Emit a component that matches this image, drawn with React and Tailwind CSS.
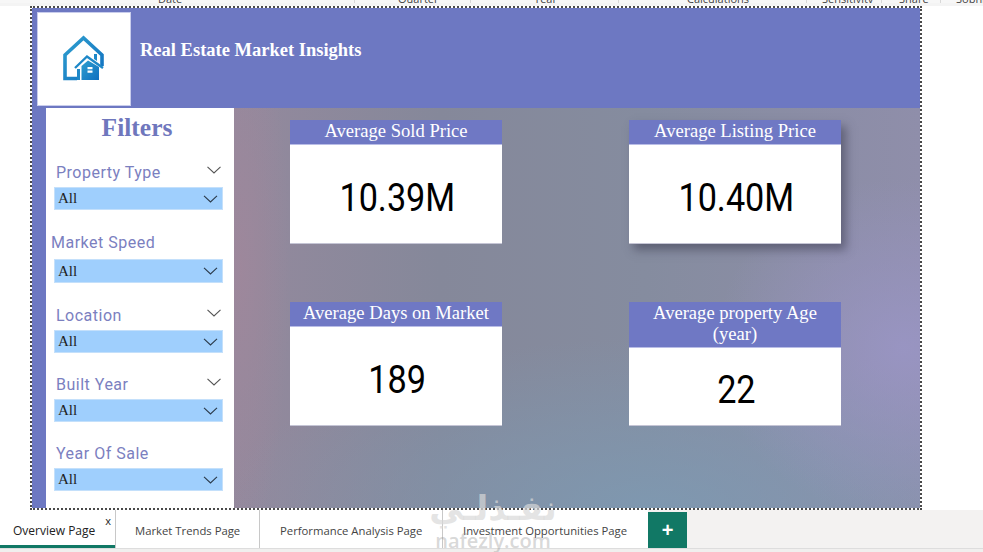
import React from 'react';

const slicers = [
  { label: 'Property Type', labelClass: 'mt-[15px] mb-[4px] pl-[2px]', boxClass: 'h-[23px]', chevron: true },
  { label: 'Market Speed', labelClass: 'mt-[23px] mb-[6px] -ml-[3px]', boxClass: 'h-[24px]', chevron: false },
  { label: 'Location', labelClass: 'mt-[23px] mb-[4px] pl-[2px]', boxClass: 'h-[23px]', chevron: true },
  { label: 'Built Year', labelClass: 'mt-[22px] mb-[4px] pl-[2px]', boxClass: 'h-[23px]', chevron: true },
  { label: 'Year Of Sale', labelClass: 'mt-[22px] mb-[4px] pl-[2px]', boxClass: 'h-[23px]', chevron: false },
];

const ribbon = [
  { text: 'Date', cls: 'w-[354px] pl-[158px]' },
  { text: 'Quarter', cls: 'w-[116px] pl-[43px] border-l border-[#d8d8d8]' },
  { text: 'Year', cls: 'w-[148px] pl-[63px] border-l border-[#d8d8d8]' },
  { text: 'Calculations', cls: 'w-[188px] pl-[68px] border-l border-[#d8d8d8]' },
  { text: 'Sensitivity', cls: 'w-[75px] pl-[15px] border-l border-[#d8d8d8]' },
  { text: 'Share', cls: 'w-[59px] pl-[17px] border-l border-[#d8d8d8]' },
  { text: 'Sophie', cls: 'w-[43px] pl-[15px] border-l border-[#d8d8d8]' },
];

const tabs = [
  { name: 'Overview Page', cls: 'w-[115px] pl-[13px] pt-[7px] text-[12px] text-[#222] border-b-[3px] border-b-[#117865]', close: true },
  { name: 'Market Trends Page', cls: 'w-[144px] pl-[19px] pt-[4px] border-l border-[#c8c8c8]' },
  { name: 'Performance Analysis Page', cls: 'w-[183px] pl-[20px] pt-[4px] border-l border-[#c8c8c8]' },
  { name: 'Investment Opportunities Page', cls: 'w-[206px] pl-[20px] pt-[4px] border-l border-[#c8c8c8]' },
];

function Chevron({ className }) {
  return (
    <svg viewBox="0 0 14 8" className={className} fill="none" stroke="currentColor" strokeWidth="1.1">
      <path d="M0.5 0.8 L7 7 L13.5 0.8" />
    </svg>
  );
}

function Logo() {
  return (
    <svg width="44" height="46" viewBox="0 0 44 46">
      <defs>
        <linearGradient id="logoGrad" x1="0" y1="0" x2="1" y2="1">
          <stop offset="0" stopColor="#2f9fcf" />
          <stop offset="1" stopColor="#0f6fc0" />
        </linearGradient>
      </defs>
      <path d="M15 43.5 H3 V20 L21.5 3 L40 20 V31" fill="none" stroke="url(#logoGrad)" strokeWidth="3.6" />
      <path d="M13 33 L25 21.5 L41 33" fill="none" stroke="#1e88c8" strokeWidth="2.4" />
      <path d="M32 19 H35 V26 L32 24 Z" fill="#1e88c8" />
      <path d="M15 34 H18 V45 H15 Z" fill="#1e88c8" />
      <path d="M19.5 31 L26 25.5 L37 32 V45 H19.5 Z" fill="url(#logoGrad)" />
      <path d="M25.5 32 H30.5 V34.3 H25.5 Z M25.5 35.4 H30.5 V37.8 H25.5 Z" fill="#ffffff" />
    </svg>
  );
}

function Card({ title, value, headerClass, shadow }) {
  return (
    <div className={`h-[124px] flex flex-col bg-white border-b border-[#c5c5d5] ${shadow ? 'shadow-[5px_6px_9px_rgba(60,60,80,0.55)]' : ''}`}>
      <div className={`bg-[#6f78c4] text-white text-center font-['Liberation_Serif',serif] text-[18.6px] leading-[21px] border-b border-[#b9bde6] ${headerClass}`}>
        {title}
      </div>
      <div className="flex-1 flex items-center justify-center pt-[8px] pl-[3px] text-black font-['Roboto',sans-serif] text-[38px]">
        <span className="inline-block scale-x-[0.9]">{value}</span>
      </div>
    </div>
  );
}

export default function App() {
  return (
    <div className="relative w-[983px] h-[552px] overflow-hidden bg-white flex flex-col">
      {/* ribbon cut off at the top */}
      <div className="h-[3px] flex items-end overflow-hidden bg-[#f7f7f7] text-[11px] leading-[11px] text-[#444] font-['Open_Sans',sans-serif]">
        {ribbon.map((r) => (
          <div key={r.text} className={`h-full flex items-end shrink-0 whitespace-nowrap ${r.cls}`}>
            <span className="translate-y-[0.5px]">{r.text}</span>
          </div>
        ))}
      </div>
      <div className="h-[3px] bg-[#f4f4f4]" />

      {/* report canvas */}
      <div className="ml-[30px] w-[892px] h-[504px] shrink-0 border-2 border-dotted border-[#4a4a4a] flex flex-col">
        <div className="h-[100px] shrink-0 bg-[#6d78c2] flex items-start pt-[4px] pl-[5px]">
          <div className="w-[94px] h-[94px] bg-white border border-[#c9cdec] flex items-center justify-center pb-[2px]">
            <Logo />
          </div>
          <div className="ml-[9px] mt-[28px] text-white font-bold font-['Liberation_Serif',serif] text-[18.5px] leading-[20px]">
            Real Estate Market Insights
          </div>
        </div>

        <div className="flex-1 flex min-h-0">
          <div className="w-[14px] bg-[#6d78c2]" />
          <div className="w-[188px] bg-white pl-[8px] pr-[11px]">
            <div className="h-[40px] flex items-center justify-center text-[#6f77bd] font-bold font-['Liberation_Serif',serif] text-[25.5px] pr-[3px]">
              Filters
            </div>
            {slicers.map((s) => (
              <div key={s.label}>
                <div className={`h-[20px] flex items-center justify-between pr-[2px] text-[#7b80bf] font-['Roboto',sans-serif] text-[16px] tracking-[0.5px] ${s.labelClass}`}>
                  <span>{s.label}</span>
                  {s.chevron && <Chevron className="w-[14px] h-[8px] mb-[6px] text-[#555]" />}
                </div>
                <div className={`flex items-center justify-between pl-[3px] pr-[4px] bg-[#9fcffd] border border-[#c4e0fb] text-[#222] font-['Liberation_Serif',serif] text-[15px] ${s.boxClass}`}>
                  <span>All</span>
                  <Chevron className="w-[15px] h-[8px] text-[#2b3a4a]" />
                </div>
              </div>
            ))}
          </div>

          <div className="flex-1 pl-[56px] pt-[12px] bg-[#85909f] bg-[radial-gradient(ellipse_50px_280px_at_6px_160px,rgba(160,135,155,0.8),transparent),radial-gradient(ellipse_190px_170px_at_670px_240px,rgba(155,150,200,0.8),transparent),radial-gradient(ellipse_430px_170px_at_420px_400px,rgba(125,155,180,0.8),transparent),linear-gradient(90deg,#94899d_0%,#85889a_30%,#858c9f_60%,#8f8eaa_100%)]">
            <div className="grid grid-cols-[212px_212px] gap-x-[127px] gap-y-[58px]">
              <Card title="Average Sold Price" value="10.39M" headerClass="h-[25px]" />
              <Card title="Average Listing Price" value="10.40M" headerClass="h-[25px]" shadow />
              <Card title="Average Days on Market" value="189" headerClass="h-[25px]" />
              <Card title={<>Average property Age<br />(year)</>} value="22" headerClass="h-[46px]" />
            </div>
          </div>
        </div>
      </div>

      {/* page tabs */}
      <div className="flex-1 flex flex-col bg-[#f3f2f1] min-h-0">
        <div className="h-[38px] flex font-['Open_Sans',sans-serif] text-[11.3px] text-[#444]">
          {tabs.map((t) => (
            <div key={t.name} className={`relative h-full flex items-center bg-white shrink-0 whitespace-nowrap ${t.cls}`}>
              {t.name}
              {t.close && <span className="absolute right-[4px] top-[5px] text-[11px] leading-none text-[#222]">x</span>}
            </div>
          ))}
          <div className="w-[39px] h-[36px] mt-[2px] bg-[#117865] flex items-center justify-center text-white font-bold text-[20px] leading-none font-['Liberation_Sans',sans-serif]">
            +
          </div>
        </div>
        <div className="flex-1 border-t border-[#dddddd] bg-[#f0efee]" />
      </div>

      {/* watermark */}
      <div className="absolute left-[436px] top-[486px] w-[114px] h-[66px] flex flex-col items-center pointer-events-none">
        <div dir="rtl" className="font-['DejaVu_Sans',sans-serif] font-bold text-[34px] leading-[44px] text-[#d8d8d8]/70 whitespace-nowrap">
          نفـذلـي
        </div>
        <div className="font-['Open_Sans',sans-serif] font-semibold text-[20px] leading-[22px] text-[#9a9a9a]/40 whitespace-nowrap">
          nafezly.com
        </div>
      </div>
    </div>
  );
}
